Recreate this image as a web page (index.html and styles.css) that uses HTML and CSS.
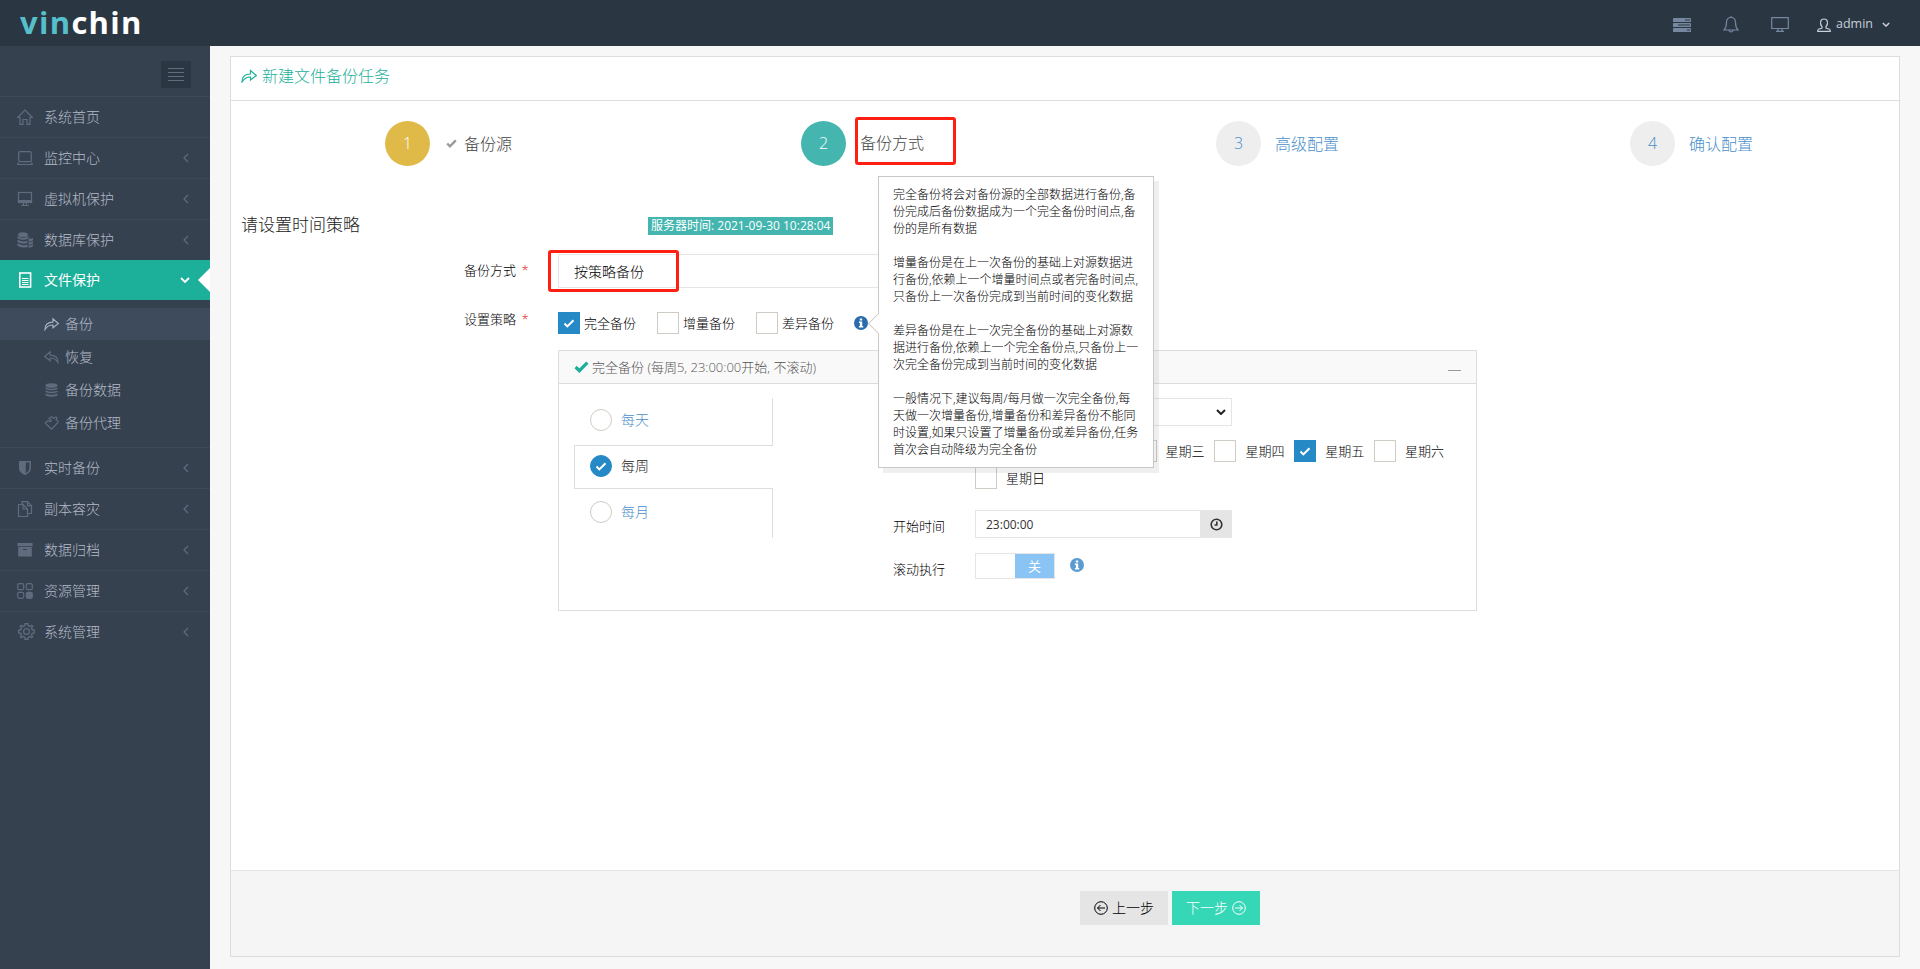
FILE: index.html
```
<!DOCTYPE html>
<html lang="zh-CN">
<head>
    <meta charset="UTF-8">
    <meta name="viewport" content="width=device-width, initial-scale=1.0">
    <title>新建文件备份任务</title>
    <link rel="stylesheet" href="styles.css">
</head>
<body>
    <!-- shared icons -->
    <svg class="sprite">
        <symbol id="i-share" viewBox="0 0 16 14"><path d="M1 13C1 7.500 4 5 9.500 5V1.500L15.300 6.500L9.500 11V8C5.500 8 3 9.500 1 13Z"/></symbol>
        <symbol id="i-reply" viewBox="0 0 16 14"><path d="M15 13C15 7.500 12 5 6.500 5V1.500L.7 6.500L6.500 11V8C10.500 8 13 9.500 15 13Z"/></symbol>
        <symbol id="i-left" viewBox="0 0 6 10"><path d="M5 1L1 5L5 9"/></symbol>
        <symbol id="i-down" viewBox="0 0 10 6"><path d="M1 1L5 5L9 1"/></symbol>
        <symbol id="i-check" viewBox="0 0 14 11"><path d="M1.500 5.500L5 9L12.500 1.500"/></symbol>
        <symbol id="i-info" viewBox="0 0 14 14"><circle cx="7" cy="7" r="7"/><path fill="#fff" d="M5.800 2.400h2.400v2H5.800zM4.900 5.600h3.300v4.300h1v1.500H4.900V9.900h1V7h-1z"/></symbol>
    </svg>

    <header class="header">
        <div class="logo"><span>vin</span>chin</div>
        <div class="top-menu">
            <svg class="top-icon" width="18" height="14" viewBox="0 0 18 14" fill="currentColor"><rect width="18" height="4" rx=".5"/><rect y="5" width="18" height="4" rx=".5"/><rect y="10" width="18" height="4" rx=".5"/><path stroke="#2b3643" d="M12 2h5M5 7h12M14 12h3"/></svg>
            <svg class="top-icon line" width="16" height="17" viewBox="0 0 16 17"><path d="M1 14C3 12 3.500 10 3.500 6.500C3.500 3.500 5 1.500 8 1.500S12.500 3.500 12.500 6.500C12.500 10 13 12 15 14ZM6 14.500C6.300 16.500 9.700 16.500 10 14.500M8 0V1.500"/></svg>
            <svg class="top-icon line" width="18" height="15" viewBox="0 0 18 15"><path d="M.7.7H17.300V11.500H.7ZM7 11.500V14M11 11.500V14M5 14.300H13"/></svg>
            <div class="user">
                <svg class="line" width="14" height="14" viewBox="0 0 14 14"><path d="M5 8.500C2.500 6 3 1 7 1S11.500 6 9 8.500V10L12.500 11.200Q13.300 11.500 13.300 13.300H.7Q.7 11.500 1.500 11.200L5 10Z"/></svg>
                <span>admin</span>
                <svg class="line caret" width="8" height="5"><use href="#i-down"/></svg>
            </div>
        </div>
    </header>

    <div class="page">
        <aside class="sidebar">
            <div class="toggler-row"><div class="toggler"><i></i><i></i><i></i><i></i></div></div>
            <ul class="menu">
                <li><svg class="icon line" viewBox="0 0 16 16"><path d="M.7 8.500L8 1L15.300 8.500H13V15.300H10V10.500H6V15.300H3V8.500Z"/></svg>系统首页</li>
                <li><svg class="icon line" viewBox="0 0 16 16"><rect x="1.700" y="1.700" width="12.600" height="10" rx="1.500"/><path d="M1.700 12.500L.7 14.500H15.300L14.300 12.500"/></svg>监控中心<svg class="arrow line"><use href="#i-left"/></svg></li>
                <li><svg class="icon line" viewBox="0 0 16 16"><rect x="1.500" y="1.500" width="13" height="10"/><path fill="currentColor" d="M1.500 9.500H14.500V11.500H1.500ZM6.500 11.500V14.500M9.500 11.500V14.500M4 14.500H12"/></svg>虚拟机保护<svg class="arrow line"><use href="#i-left"/></svg></li>
                <li><svg class="icon" viewBox="0 0 16 16" fill="currentColor"><ellipse cx="6" cy="2.700" rx="5" ry="2.500"/><path d="M.5 4.300q5.500 3.200 11 0v2q-5.500 3-11 0zM.5 7.700q5.500 3 10 1v2q-5 2-10-.7zM.5 11.300q5.500 3 10 1.200v2.500q-6 1.500-10-1.200z"/><path d="M11.500 6q2.500 1.500 4.500 0v2q-1 1.700-4.500 1.400zM11.500 10.400q3 0 4.500-1.400v2q-1 1.700-4.500 1.700zM11.500 13.500q3 0 4.500-1.500v2q-1 1.700-4.500 1.700z"/></svg>数据库保护<svg class="arrow line"><use href="#i-left"/></svg></li>
                <li class="active"><svg class="icon" viewBox="0 0 16 16" fill="none" stroke="currentColor"><rect x="2.800" y="1" width="10.800" height="14" stroke-width="1.600"/><path d="M5 6.500H11.500M5 8.500H11.500M5 10.500H11.500M5 12.500H11.500"/></svg>文件保护<svg class="arrow-open line"><use href="#i-down"/></svg></li>
            </ul>
            <ul class="submenu">
                <li class="current"><svg class="line"><use href="#i-share"/></svg>备份</li>
                <li><svg class="line"><use href="#i-reply"/></svg>恢复</li>
                <li><svg viewBox="0 0 14 14" fill="currentColor"><ellipse cx="7" cy="2.500" rx="6" ry="2.300"/><path d="M1 4.500q6 2.600 12 0V6q-6 2.600-12 0zM1 7.500q6 2.600 12 0V9q-6 2.600-12 0zM1 10.500q6 2.600 12 0v2q-6 2.600-12 0z"/></svg>备份数据</li>
                <li><svg class="line" viewBox="0 0 14 14"><path d="M.7 7L3.500 4.500L5 5.500C7 6 7.500 4 5.700 3.500L4.500 2.500L6 1.200C7.500 .3 8.500 1 8.700 2.300C10 3 10.500 .7 11.500 1C13 1 12.300 3 11.500 3.700C12.500 5 13.800 4 13.500 6.500L7 13.200Z"/></svg>备份代理</li>
            </ul>
            <ul class="menu">
                <li><svg class="icon" viewBox="0 0 16 16" fill="none" stroke="currentColor" stroke-width="1.500"><path d="M2.800 1.700H13.200V8Q13.200 12 8 14.300Q2.800 12 2.800 8Z"/><path fill="currentColor" d="M8 2V14Q3 12 3 8V2Z"/></svg>实时备份<svg class="arrow line"><use href="#i-left"/></svg></li>
                <li><svg class="icon line" viewBox="0 0 16 16"><path d="M6 3.500H1.500V15.500H10.500V8L6 3.500V8H10.500M5 3.500V.7H10.500L14.500 4.700V12.500H10.500M10.500 .7V4.700H14.500"/></svg>副本容灾<svg class="arrow line"><use href="#i-left"/></svg></li>
                <li><svg class="icon" viewBox="0 0 16 16" fill="currentColor"><path d="M.5 1h15v3.300H.5zM1.200 5h13.600v9.500H1.200z"/><path stroke="#364150" d="M6 7.500h4"/></svg>数据归档<svg class="arrow line"><use href="#i-left"/></svg></li>
                <li><svg class="icon line" viewBox="0 0 16 16"><rect x=".7" y=".7" width="6" height="6" rx="1.500"/><rect x="9.300" y=".7" width="6" height="6" rx="1.500"/><rect x=".7" y="9.300" width="6" height="6" rx="1.500"/><rect x="9.300" y="9.300" width="6" height="6" rx="1.500" fill="currentColor"/></svg>资源管理<svg class="arrow line"><use href="#i-left"/></svg></li>
                <li><svg class="icon line gear" viewBox="0 0 16 16"><circle cx="8" cy="8" r="2.700"/><path d="M6.700 .7H9.300L9.700 2.700L11.200 3.300L12.900 2.200L13.800 3.100L12.700 4.800L13.300 6.300L15.300 6.700V9.300L13.300 9.700L12.700 11.200L13.800 12.900L12.900 13.800L11.200 12.700L9.700 13.300L9.300 15.300H6.700L6.300 13.300L4.800 12.700L3.100 13.800L2.200 12.900L3.300 11.200L2.700 9.700L.7 9.300V6.700L2.700 6.300L3.300 4.800L2.200 3.100L3.100 2.200L4.800 3.300L6.300 2.700Z"/></svg>系统管理<svg class="arrow line"><use href="#i-left"/></svg></li>
            </ul>
        </aside>

        <main class="portlet">
            <div class="portlet-title"><svg class="line" width="16" height="14"><use href="#i-share"/></svg>新建文件备份任务</div>

            <div class="steps">
                <div class="step done"><span class="number">1</span><svg class="step-check"><use href="#i-check"/></svg><span>备份源</span></div>
                <div class="step active"><span class="number">2</span><span class="marked">备份方式</span></div>
                <div class="step"><span class="number">3</span><span>高级配置</span></div>
                <div class="step"><span class="number">4</span><span>确认配置</span></div>
            </div>

            <div class="content">
                <div class="time-row">
                    <h3>请设置时间策略</h3>
                    <span class="server-time">服务器时间: 2021-09-30 10:28:04</span>
                </div>

                <div class="form-row mode-row">
                    <label>备份方式 <em>*</em></label>
                    <div class="mode-select">按策略备份<div class="mark"></div></div>
                </div>

                <div class="form-row policy-row">
                    <label>设置策略 <em>*</em></label>
                    <div class="policies">
                        <div class="check"><span class="box on"><svg><use href="#i-check"/></svg></span>完全备份</div>
                        <div class="check"><span class="box"></span>增量备份</div>
                        <div class="check"><span class="box"></span>差异备份</div>
                        <div class="help">
                            <svg class="info"><use href="#i-info"/></svg>
                            <div class="popover">
                                <p>完全备份将会对备份源的全部数据进行备份,备<br>份完成后备份数据成为一个完全备份时间点,备<br>份的是所有数据</p>
                                <p>增量备份是在上一次备份的基础上对源数据进<br>行备份,依赖上一个增量时间点或者完备时间点,<br>只备份上一次备份完成到当前时间的变化数据</p>
                                <p>差异备份是在上一次完全备份的基础上对源数<br>据进行备份,依赖上一个完全备份点,只备份上一<br>次完全备份完成到当前时间的变化数据</p>
                                <p>一般情况下,建议每周/每月做一次完全备份,每<br>天做一次增量备份,增量备份和差异备份不能同<br>时设置,如果只设置了增量备份或差异备份,任务<br>首次会自动降级为完全备份</p>
                            </div>
                        </div>
                    </div>
                </div>

                <section class="panel">
                    <div class="panel-head">
                        <svg><use href="#i-check"/></svg>
                        <span>完全备份 (每周5, 23:00:00开始, 不滚动)</span>
                        <i class="collapse"></i>
                    </div>
                    <div class="panel-body">
                        <div class="tabs">
                            <div class="tab day"><span class="radio"></span>每天</div>
                            <div class="tab week active"><span class="radio on"><svg><use href="#i-check"/></svg></span>每周</div>
                            <div class="tab month"><span class="radio"></span>每月</div>
                        </div>
                        <div class="schedule">
                            <div class="select"><svg><use href="#i-down"/></svg></div>
                            <div class="days">
                                <div class="check"><span class="box"></span></div>
                                <div class="check"><span class="box"></span></div>
                                <div class="check"><span class="box"></span>星期三</div>
                                <div class="check"><span class="box"></span>星期四</div>
                                <div class="check"><span class="box on"><svg><use href="#i-check"/></svg></span>星期五</div>
                                <div class="check"><span class="box"></span>星期六</div>
                                <div class="check"><span class="box"></span>星期日</div>
                            </div>
                            <div class="field start">
                                <label>开始时间</label>
                                <div class="time-input">23:00:00</div>
                                <div class="addon"><svg width="13" height="13" viewBox="0 0 13 13"><circle cx="6.500" cy="6.500" r="5.300"/><path d="M6.800 3.500V7H4.500"/></svg></div>
                            </div>
                            <div class="field roll">
                                <label>滚动执行</label>
                                <div class="switch"><span>关</span></div>
                                <svg class="info"><use href="#i-info"/></svg>
                            </div>
                        </div>
                    </div>
                </section>
            </div>

            <div class="actions">
                <button class="prev"><svg viewBox="0 0 14 14"><circle cx="7" cy="7" r="6.300"/><path d="M11 7H3.500M6.500 4L3.500 7L6.500 10"/></svg>上一步</button>
                <button class="next">下一步<svg viewBox="0 0 14 14"><circle cx="7" cy="7" r="6.300"/><path d="M3 7H10.500M7.500 4L10.500 7L7.500 10"/></svg></button>
            </div>
        </main>
    </div>
</body>
</html>
```
FILE: styles.css
```
* {
    box-sizing: border-box;
}
body {
    margin: 0;
    height: 969px;
    overflow: hidden;
    background: #f7f7f7;
    font-family: "Open Sans", "Noto Sans CJK SC", sans-serif;
    font-size: 13px;
    font-weight: 300;
    line-height: 20px;
    color: #000;
}
ul, p, h3 {
    margin: 0;
    padding: 0;
    list-style: none;
}
svg {
    flex: none;
}
.sprite {
    display: none;
}
.line {
    fill: none;
    stroke: currentColor;
    stroke-width: 1.2;
}

/* header */
.header {
    height: 46px;
    background: #2b3643;
    display: flex;
    justify-content: space-between;
}
.logo {
    margin-left: 20px;
    font: 700 31px/44px "Open Sans", sans-serif;
    letter-spacing: 1.3px;
    color: #fff;
}
.logo span {
    color: #55bfcb;
}
.top-menu {
    display: flex;
    align-items: center;
    padding: 3px 30px 0 0;
    color: #76889f;
}
.top-icon {
    margin-right: 32px;
}
.user {
    display: flex;
    align-items: center;
    color: #c6cfda;
    font-weight: 400;
    margin-left: -4px;
}
.user span {
    margin: -1px 9px 0 5px;
    font-size: 12.500px;
}
.caret {
    stroke-width: 1.8;
}

.page {
    display: flex;
    height: 923px;
}

/* sidebar */
.sidebar {
    width: 210px;
    background: #364150;
    color: #b4bcc8;
    font-size: 14px;
}
.toggler-row {
    height: 50px;
    padding: 15px 19px 0 0;
    display: flex;
    justify-content: flex-end;
}
.toggler {
    width: 30px;
    height: 27px;
    background: #2b3643;
    padding: 7px;
    display: flex;
    flex-direction: column;
    gap: 3px;
}
.toggler i {
    height: 1px;
    background: #606c7d;
}
.menu li {
    position: relative;
    height: 41px;
    border-top: 1px solid #3d4957;
    padding: 0 0 1px 17px;
    display: flex;
    align-items: center;
}
.icon {
    width: 16px;
    height: 16px;
    margin-right: 11px;
    color: #606c7d;
}
.gear {
    width: 17px;
    height: 17px;
    margin: 0 9px 0 1px;
}
.arrow {
    width: 6px;
    height: 10px;
    margin-left: auto;
    margin-right: 21px;
    color: #606c7d;
}
.menu li.active {
    background: #1caf9a;
    border-color: #1caf9a;
    color: #fff;
    height: 40px;
    font-weight: 400;
}
.menu li.active .icon {
    color: #fff;
}
.menu li.active::after {
    content: "";
    position: absolute;
    right: 0;
    top: 7px;
    border: 12px solid transparent;
    border-left: 0;
    border-right-color: #fff;
}
.arrow-open {
    width: 10px;
    height: 6px;
    margin-left: auto;
    margin-right: 20px;
    stroke-width: 1.8;
}
.submenu {
    padding-top: 8px;
    height: 147px;
}
.submenu li {
    height: 32px;
    margin-bottom: 1px;
    padding: 0 0 1px 44px;
    display: flex;
    align-items: center;
}
.submenu svg {
    width: 15px;
    height: 14px;
    margin-right: 6px;
    color: #606c7d;
}
.submenu .current {
    background: #3e4b5c;
}
.submenu .current svg {
    color: #a7b1bf;
}
.menu:last-child {
    padding-bottom: 7px;
}

/* main box */
.portlet {
    margin: 10px 20px 0;
    width: 1670px;
    height: 901px;
    border: 1px solid #ddd;
    background: #fff;
    display: flex;
    flex-direction: column;
}
.portlet-title {
    height: 44px;
    border-bottom: 1px solid #ddd;
    padding: 0 10px 6px;
    display: flex;
    align-items: center;
    gap: 5px;
    font-size: 16px;
    color: #1caf9a;
}
.steps {
    display: flex;
    padding: 20px 0 0 154px;
    font-size: 16px;
    color: #4b8fca;
}
.step {
    flex: none;
    width: 414px;
    display: flex;
    align-items: center;
}
.step:last-child {
    width: 200px;
}
.step.done {
    width: 416px;
}
.step.active {
    width: 415px;
}
.number {
    width: 45px;
    height: 45px;
    border-radius: 50%;
    background: #eee;
    line-height: 44px;
    text-align: center;
    margin-right: 14px;
}
.step.done, .step.active {
    color: #444;
}
.done .number {
    background: #dfba49;
    color: #fff;
    margin-right: 16px;
}
.active .number {
    background: #45b6af;
    color: #fff;
}
.step-check {
    width: 11px;
    height: 9px;
    margin-right: 7px;
    fill: none;
    stroke: #999;
    stroke-width: 3;
}
.marked {
    border: 3px solid #ff1f12;
    border-radius: 3px;
    width: 101px;
    height: 48px;
    line-height: 46px;
    padding-left: 2px;
    margin: -5px 0 0 -5px;
}

/* form */
.content {
    flex: 1;
}
.time-row {
    display: flex;
    padding: 47px 0 0 10px;
}
h3 {
    width: 407px;
    height: 26px;
    font-size: 17px;
    font-weight: 300;
    line-height: 24px;
    color: #222;
}
.server-time {
    height: 18px;
    margin-top: 4px;
    padding: 0 3px;
    line-height: 17px;
    font-size: 12px;
    font-weight: 400;
    white-space: nowrap;
    background: #45b6af;
    color: #fff;
}
.form-row {
    display: flex;
}
.form-row label {
    width: 327px;
    padding-left: 233px;
}
.form-row em {
    margin-left: 2px;
    font-style: normal;
    color: #e02222;
}
.mode-row {
    margin-top: 15px;
}
.mode-row label {
    padding-top: 6px;
}
.mode-select {
    position: relative;
    width: 560px;
    height: 34px;
    border: 1px solid #e5e5e5;
    padding-left: 15px;
    line-height: 33px;
    font-size: 14px;
}
.mark {
    position: absolute;
    left: -11px;
    top: -5px;
    width: 131px;
    height: 42px;
    border: 3px solid #ff1f12;
    border-radius: 3px;
}
.policy-row {
    margin-top: 24px;
}
.policy-row label {
    margin-top: -3px;
}
.policies {
    display: flex;
}
.check {
    display: flex;
    align-items: center;
    line-height: 19px;
    white-space: nowrap;
}
.policies .check {
    width: 99px;
    gap: 4px;
}
.box {
    flex: none;
    width: 22px;
    height: 22px;
    border: 1px solid #ceccc5;
    background: #fff;
    display: flex;
    align-items: center;
    justify-content: center;
}
.box.on, .radio.on {
    background: #2489c5;
    border-color: #2489c5;
}
.box svg, .radio svg {
    width: 12px;
    height: 9px;
    fill: none;
    stroke: #fff;
    stroke-width: 2.500;
}
.help {
    position: relative;
    margin-left: -1px;
    padding-top: 4px;
}
.info {
    display: block;
    width: 14px;
    height: 14px;
    fill: #2a6cab;
}
.popover {
    position: absolute;
    z-index: 10;
    left: 24px;
    top: -136px;
    width: 276px;
    height: 292px;
    padding: 9px 14px;
    border: 1px solid #c8c8c8;
    background: #fff;
    box-shadow: 5px 5px rgba(102, 102, 102, .1);
    font-size: 12px;
    line-height: 17px;
    white-space: nowrap;
}
.popover p {
    margin-bottom: 17px;
}
.popover::before {
    content: "";
    position: absolute;
    left: -8px;
    top: 139px;
    width: 14px;
    height: 14px;
    border: 1px solid #ccc;
    border-width: 0 0 1px 1px;
    background: #fff;
    transform: rotate(45deg);
}

/* policy panel */
.panel {
    margin: 16px 0 0 327px;
    width: 919px;
    height: 261px;
    border: 1px solid #ddd;
}
.panel-head {
    height: 33px;
    border-bottom: 1px solid #ddd;
    background: #f9f9f9;
    padding: 0 15px;
    display: flex;
    align-items: center;
    color: #555;
}
.panel-head svg {
    width: 15px;
    height: 12px;
    margin-right: 3px;
    fill: none;
    stroke: #1caf9a;
    stroke-width: 3;
}
.collapse {
    margin: 6px 0 0 auto;
    width: 13px;
    height: 1px;
    background: #999;
}
.panel-body {
    display: flex;
    padding: 14px 15px 0;
}
.tabs {
    flex: none;
    width: 199px;
    height: 139px;
    font-size: 14px;
    color: #4b8fca;
}
.tab {
    padding-left: 16px;
    display: flex;
    align-items: center;
    gap: 9px;
}
.tab.day {
    height: 47px;
    padding-bottom: 4px;
    border-right: 1px solid #ddd;
}
.tab.week {
    height: 44px;
    padding: 0 0 2px 15px;
    border: 1px solid #ddd;
    border-right: 0;
    color: #222;
}
.tab.month {
    height: 49px;
    padding-bottom: 3px;
    border-right: 1px solid #ddd;
}
.radio {
    width: 22px;
    height: 22px;
    border: 1px solid #ceccc5;
    border-radius: 50%;
    display: flex;
    align-items: center;
    justify-content: center;
}
.schedule {
    flex: none;
    width: 610px;
    padding-left: 120px;
}
.select {
    margin-left: 82px;
    width: 257px;
    height: 28px;
    border: 1px solid #e5e5e5;
    display: flex;
    align-items: center;
    justify-content: flex-end;
    padding-right: 5px;
}
.select svg {
    width: 10px;
    height: 6px;
    fill: none;
    stroke: #222;
    stroke-width: 2;
}
.days {
    margin: 14px 0 0 82px;
    width: 490px;
    display: grid;
    grid-template-columns: repeat(6, 79.800px);
    grid-auto-rows: 22px;
    row-gap: 5px;
}
.days .check {
    gap: 9px;
}
.field {
    display: flex;
}
.field label {
    width: 82px;
    padding-top: 6px;
}
.start {
    margin-top: 21px;
}
.time-input {
    width: 225px;
    height: 28px;
    border: 1px solid #e5e5e5;
    border-right: 0;
    padding-left: 10px;
    line-height: 27px;
    font-size: 12px;
    font-weight: 400;
    color: #333;
}
.addon {
    width: 32px;
    height: 28px;
    background: #e5e5e5;
    display: flex;
    align-items: center;
    justify-content: center;
}
.addon svg {
    fill: none;
    stroke: #333;
    stroke-width: 1.600;
}
.roll {
    margin-top: 15px;
}
.switch {
    width: 80px;
    height: 26px;
    border: 1px solid #e5e5e5;
    display: flex;
    justify-content: flex-end;
}
.switch span {
    width: 39px;
    background: #89c4f4;
    color: #fff;
    text-align: center;
    line-height: 24px;
    font-weight: 400;
}
.roll .info {
    margin: 5px 0 0 15px;
    fill: #5b9bd1;
}

/* bottom buttons */
.actions {
    height: 86px;
    border-top: 1px solid #e5e5e5;
    background: #f5f5f5;
    padding: 20px 0 0 849px;
    display: flex;
    gap: 4px;
}
button {
    width: 88px;
    height: 34px;
    border: 0;
    padding: 0;
    display: flex;
    align-items: center;
    justify-content: center;
    gap: 4px;
    font: inherit;
    font-size: 14px;
    background: #e5e5e5;
    color: #000;
}
button svg {
    width: 14px;
    height: 14px;
    fill: none;
    stroke: currentColor;
}
.next {
    background: #36d7b7;
    color: #fff;
}
```
